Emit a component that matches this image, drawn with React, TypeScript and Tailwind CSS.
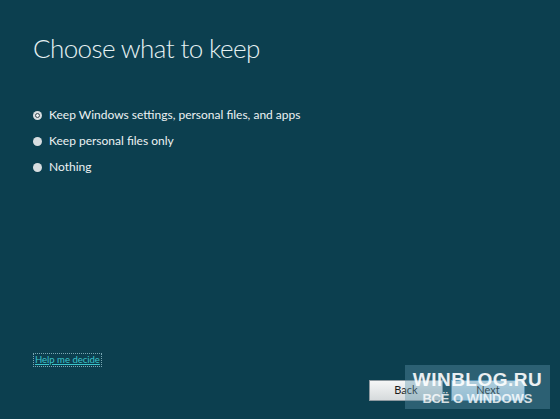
export default function App() {
  const options = [
    { label: "Keep Windows settings, personal files, and apps", checked: true },
    { label: "Keep personal files only", checked: false },
    { label: "Nothing", checked: false },
  ];

  return (
    <div
      className="relative w-[560px] h-[419px] bg-[#0c3f4f] overflow-hidden flex flex-col"
      style={{ fontFamily: 'Lato, "Open Sans", "Liberation Sans", sans-serif' }}
    >
      {/* Title */}
      <h1 className="pl-[33px] pt-[31px] text-[26px] leading-[35px] font-light tracking-[-0.6px] text-[#e6f1f3]">
        Choose what to keep
      </h1>

      {/* Options */}
      <div className="pl-[33px] pt-[40px] flex flex-col gap-[8px]">
        {options.map((o) => (
          <div key={o.label} className="flex items-center gap-[7px] h-[18px]">
            <span className="w-[9px] h-[9px] rounded-full bg-[#d8dde0] flex items-center justify-center">
              {o.checked && (
                <span className="w-[5px] h-[5px] rounded-full border-[1.5px] border-[#3a4a52] bg-[#e9eef0]" />
              )}
            </span>
            <span className="text-[12px] text-[#edf2f3]">{o.label}</span>
          </div>
        ))}
      </div>

      <div className="flex-1" />

      {/* Help link */}
      <div className="pl-[33px] pb-[11px]">
        <span className="inline-block border border-dotted border-[#7aa8b4] px-[1px] text-[9.5px] leading-[12px] text-[#3cc4cc] underline">
          Help me decide
        </span>
      </div>

      {/* Buttons */}
      <div className="flex justify-end gap-[8px] pr-[35px] pb-[18px]">
        <button className="w-[74px] h-[21px] border border-[#8e9aa0] bg-gradient-to-b from-[#f6f7f7] to-[#d6dadc] text-[11px] text-[#1b1b1b]">
          Back
        </button>
        <button className="w-[74px] h-[21px] border border-[#4f90b8] bg-gradient-to-b from-[#e4f2fb] to-[#b7d8ee] text-[11px] text-[#1b1b1b]">
          Next
        </button>
      </div>

      {/* Watermark */}
      <div
        className="absolute left-[405px] top-[365px] w-[145px] h-[44px] bg-[#5d93aa]/40 flex flex-col items-center justify-center leading-none"
        style={{ fontFamily: '"Liberation Sans", Arial, sans-serif' }}
      >
        <span className="text-[19px] font-bold text-white/90 tracking-[0.5px]">WINBLOG.RU</span>
        <span className="text-[13px] font-bold text-white/80 mt-[3px]">ВСЁ О WINDOWS</span>
      </div>
    </div>
  );
}
